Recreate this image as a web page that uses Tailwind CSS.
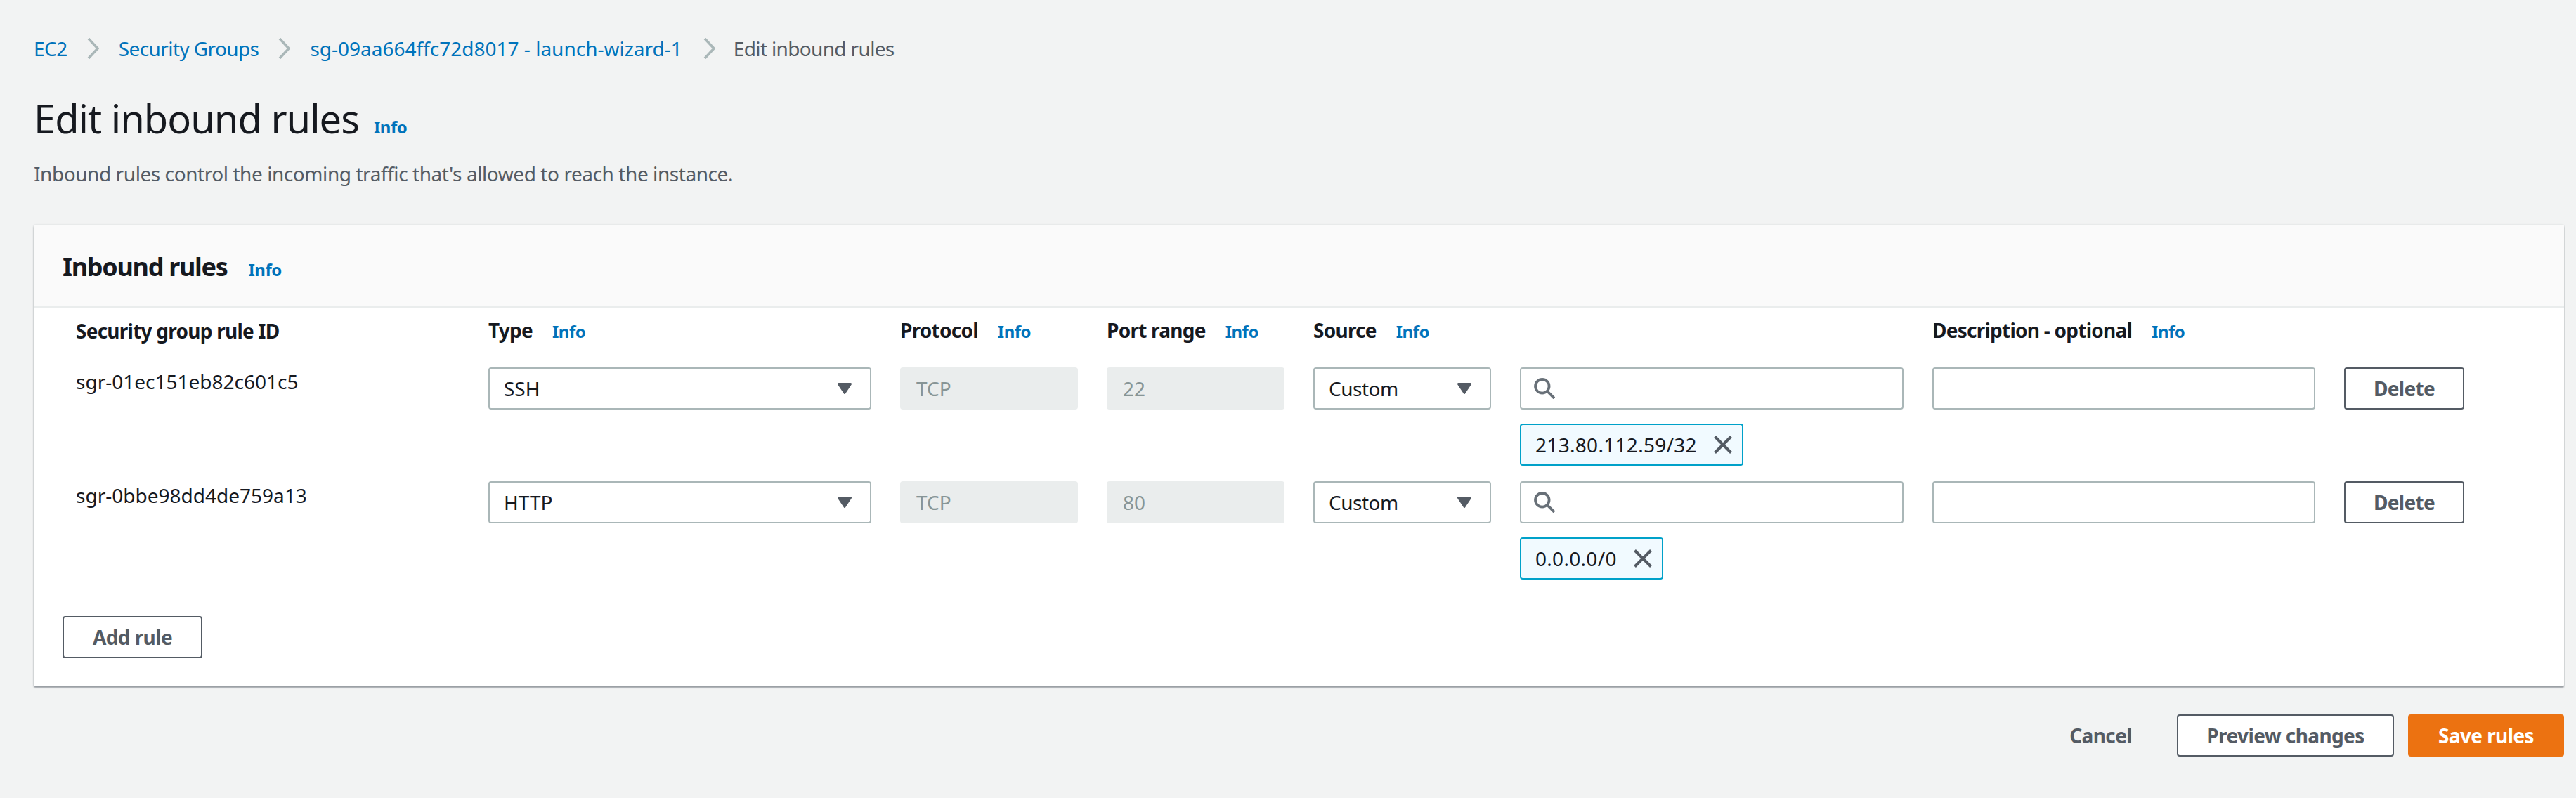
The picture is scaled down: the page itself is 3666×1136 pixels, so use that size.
<!DOCTYPE html>
<html><head><meta charset="utf-8"><script src="https://cdn.jsdelivr.net/npm/@tailwindcss/browser@4"></script></head>
<body class="bg-[#f2f3f3] font-['Noto_Sans',sans-serif] text-[28px] leading-[40px] text-[#16191f] w-[3666px] h-[1136px] overflow-hidden">
<div class="pl-[48px] pr-[17px] pt-[49px]">
  <nav class="flex items-center h-[40px] text-[#0073bb]">
    <span class="tracking-[-0.5px]">EC2</span>
    <svg class="ml-[28px] mr-[28px] w-[17px] h-[30px]" viewBox="0 0 17 30" fill="none" stroke="#aab7b8" stroke-width="3.5"><path d="M2 1l13 14L2 29"/></svg>
    <span class="tracking-[-0.6px]">Security Groups</span>
    <svg class="ml-[28px] mr-[28px] w-[17px] h-[30px]" viewBox="0 0 17 30" fill="none" stroke="#aab7b8" stroke-width="3.5"><path d="M2 1l13 14L2 29"/></svg>
    <span>sg-09aa664ffc72d8017 - launch-wizard-1</span>
    <svg class="ml-[30px] mr-[26px] w-[17px] h-[30px]" viewBox="0 0 17 30" fill="none" stroke="#aab7b8" stroke-width="3.5"><path d="M2 1l13 14L2 29"/></svg>
    <span class="text-[#545b64] tracking-[-0.65px]">Edit inbound rules</span>
  </nav>
  <div class="flex items-baseline gap-[21px] mt-[43px] h-[72px]">
    <h1 class="text-[56px] leading-[72px] tracking-[-1px]">Edit inbound rules</h1>
    <a class="text-[24px] font-bold tracking-[-0.5px] text-[#0073bb]">Info</a>
  </div>
  <p class="mt-[23px] text-[#545b64] tracking-[-0.43px]">Inbound rules control the incoming traffic that's allowed to reach the instance.</p>
  <section class="mt-[53px] bg-white rounded-[2px] shadow-[0_2px_2px_rgba(84,91,100,0.55),0_0_2px_rgba(0,28,36,0.15)]">
    <header class="flex items-baseline gap-[30px] h-[118px] bg-[#fafafa] border-b-2 border-[#eaeded] pl-[41px] pt-[38px]">
      <h2 class="text-[36px] leading-[44px] font-bold tracking-[-1.3px]">Inbound rules</h2>
      <a class="text-[24px] font-bold tracking-[-0.5px] text-[#0073bb]">Info</a>
    </header>
    <div class="pl-[60px] pt-[12px]">
      <div class="grid grid-cols-[546px_545px_253px_253px_253px_546px_545px_171px] gap-x-[41px] font-bold h-[40px] items-center">
        <div class="tracking-[-0.75px]">Security group rule ID</div>
        <div class="flex items-baseline gap-[28px] tracking-[-0.75px]">Type <a class="text-[24px] tracking-[-0.5px] text-[#0073bb]">Info</a></div>
        <div class="flex items-baseline gap-[28px] tracking-[-0.75px]">Protocol <a class="text-[24px] tracking-[-0.5px] text-[#0073bb]">Info</a></div>
        <div class="flex items-baseline gap-[28px] tracking-[-0.75px]">Port range <a class="text-[24px] tracking-[-0.5px] text-[#0073bb]">Info</a></div>
        <div class="flex items-baseline gap-[28px] tracking-[-0.75px]">Source <a class="text-[24px] tracking-[-0.5px] text-[#0073bb]">Info</a></div>
        <div></div>
        <div class="flex items-baseline gap-[28px] tracking-[-0.75px]">Description - optional <a class="text-[24px] tracking-[-0.5px] text-[#0073bb]">Info</a></div>
        <div></div>
      </div>

      <div class="grid grid-cols-[546px_545px_253px_253px_253px_546px_545px_171px] gap-x-[41px] mt-[33px]">
        <div>sgr-01ec151eb82c601c5</div>
        <div class="h-[60px] bg-white border-2 border-[#aab7b8] rounded-[4px] flex items-center justify-between pl-[20px] pr-[26px]">SSH
          <svg class="w-[20px] h-[16px]" viewBox="0 0 20 16" fill="#545b64"><path d="M1.5 0h17a1.5 1.5 0 0 1 1.2 2.4L11 15.4a1.3 1.3 0 0 1-2 0L.3 2.4A1.5 1.5 0 0 1 1.5 0z"/></svg></div>
        <div class="h-[60px] bg-[#eaeded] rounded-[4px] flex items-center pl-[23px] text-[#879596]">TCP</div>
        <div class="h-[60px] bg-[#eaeded] rounded-[4px] flex items-center pl-[23px] text-[#879596]">22</div>
        <div class="h-[60px] bg-white border-2 border-[#aab7b8] rounded-[4px] flex items-center justify-between pl-[20px] pr-[26px]"><span class="tracking-[-0.5px]">Custom</span>
          <svg class="w-[20px] h-[16px]" viewBox="0 0 20 16" fill="#545b64"><path d="M1.5 0h17a1.5 1.5 0 0 1 1.2 2.4L11 15.4a1.3 1.3 0 0 1-2 0L.3 2.4A1.5 1.5 0 0 1 1.5 0z"/></svg></div>
        <div>
          <div class="h-[60px] bg-white border-2 border-[#aab7b8] rounded-[4px] flex items-center pl-[18px]">
            <svg class="w-[30px] h-[30px]" viewBox="0 0 30 30" fill="none" stroke="#687078" stroke-width="3.8"><circle cx="11.8" cy="11.8" r="9.8"/><path d="M18.5 18.5L29 29"/></svg>
          </div>
          <div class="mt-[20px] inline-flex items-center h-[60px] bg-[#f1faff] border-2 border-[#00a1c9] rounded-[4px] pl-[20px] pr-[14px] gap-[24px]"><span class="tracking-[0.3px]">213.80.112.59/32</span>
            <svg class="w-[26px] h-[26px]" viewBox="0 0 26 26" fill="none" stroke="#545b64" stroke-width="4"><path d="M1.5 1.5l23 23M24.5 1.5l-23 23"/></svg></div>
        </div>
        <div class="h-[60px] bg-white border-2 border-[#aab7b8] rounded-[4px]"></div>
        <button class="h-[60px] border-2 border-[#545b64] rounded-[4px] font-bold tracking-[-0.7px] text-[#545b64] bg-white">Delete</button>
      </div>

      <div class="grid grid-cols-[546px_545px_253px_253px_253px_546px_545px_171px] gap-x-[41px] mt-[22px]">
        <div>sgr-0bbe98dd4de759a13</div>
        <div class="h-[60px] bg-white border-2 border-[#aab7b8] rounded-[4px] flex items-center justify-between pl-[20px] pr-[26px]">HTTP
          <svg class="w-[20px] h-[16px]" viewBox="0 0 20 16" fill="#545b64"><path d="M1.5 0h17a1.5 1.5 0 0 1 1.2 2.4L11 15.4a1.3 1.3 0 0 1-2 0L.3 2.4A1.5 1.5 0 0 1 1.5 0z"/></svg></div>
        <div class="h-[60px] bg-[#eaeded] rounded-[4px] flex items-center pl-[23px] text-[#879596]">TCP</div>
        <div class="h-[60px] bg-[#eaeded] rounded-[4px] flex items-center pl-[23px] text-[#879596]">80</div>
        <div class="h-[60px] bg-white border-2 border-[#aab7b8] rounded-[4px] flex items-center justify-between pl-[20px] pr-[26px]"><span class="tracking-[-0.5px]">Custom</span>
          <svg class="w-[20px] h-[16px]" viewBox="0 0 20 16" fill="#545b64"><path d="M1.5 0h17a1.5 1.5 0 0 1 1.2 2.4L11 15.4a1.3 1.3 0 0 1-2 0L.3 2.4A1.5 1.5 0 0 1 1.5 0z"/></svg></div>
        <div>
          <div class="h-[60px] bg-white border-2 border-[#aab7b8] rounded-[4px] flex items-center pl-[18px]">
            <svg class="w-[30px] h-[30px]" viewBox="0 0 30 30" fill="none" stroke="#687078" stroke-width="3.8"><circle cx="11.8" cy="11.8" r="9.8"/><path d="M18.5 18.5L29 29"/></svg>
          </div>
          <div class="mt-[20px] inline-flex items-center h-[60px] bg-[#f1faff] border-2 border-[#00a1c9] rounded-[4px] pl-[20px] pr-[14px] gap-[24px]"><span class="tracking-[0.3px]">0.0.0.0/0</span>
            <svg class="w-[26px] h-[26px]" viewBox="0 0 26 26" fill="none" stroke="#545b64" stroke-width="4"><path d="M1.5 1.5l23 23M24.5 1.5l-23 23"/></svg></div>
        </div>
        <div class="h-[60px] bg-white border-2 border-[#aab7b8] rounded-[4px]"></div>
        <button class="h-[60px] border-2 border-[#545b64] rounded-[4px] font-bold tracking-[-0.7px] text-[#545b64] bg-white">Delete</button>
      </div>
    </div>
    <div class="pl-[41px] pt-[52px] pb-[40px]">
      <button class="w-[199px] h-[60px] border-2 border-[#545b64] rounded-[4px] font-bold tracking-[-0.6px] text-[#545b64] bg-white">Add rule</button>
    </div>
  </section>
  <div class="flex justify-end items-center mt-[40px] h-[60px] font-bold tracking-[-0.6px]">
    <span class="text-[#545b64] mr-[64px]">Cancel</span>
    <button class="w-[309px] h-[60px] border-2 border-[#545b64] rounded-[4px] text-[#545b64] bg-white mr-[20px]">Preview changes</button>
    <button class="w-[222px] h-[60px] rounded-[4px] text-white bg-[#ec7211]">Save rules</button>
  </div>
</div>
</body></html>
